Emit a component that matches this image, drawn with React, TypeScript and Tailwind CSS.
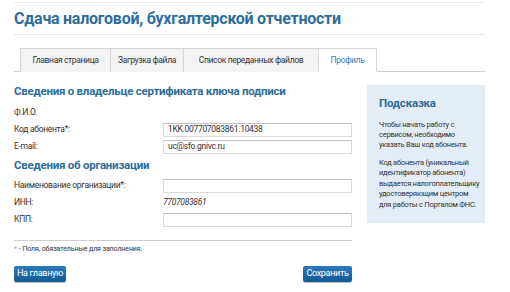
import React from "react";

const tabs = [
  { id: 1, title: "Главная страница", w: "w-[90px]" },
  { id: 2, title: "Загрузка файла", w: "w-[73px]" },
  { id: 3, title: "Список переданных файлов", w: "w-[135px]" },
  { id: 4, title: "Профиль", w: "w-[59px]", active: true },
];

const font = "font-['Roboto',sans-serif]";

const Row = ({ label, children }: { label: string; children?: React.ReactNode }) => (
  <div className="h-[17px] flex items-center">
    <div className="w-[149px] shrink-0 text-[8.5px] tracking-[-0.3px] text-[#333]">{label}</div>
    <div className="flex-1">{children}</div>
  </div>
);

const Field = ({ value }: { value?: string }) => (
  <div className="h-[14px] border border-[#dadada] border-t-[#c2c2c2] bg-white flex items-center px-[4px] text-[8.5px] tracking-[-0.3px] text-[#333]">
    {value}
  </div>
);

const Button = ({ label }: { label: string }) => (
  <div className="h-[16px] rounded-[2px] bg-gradient-to-b from-[#2a7bbd] to-[#0d5a96] text-white text-[9px] tracking-[-0.3px] flex items-center justify-center shadow-[0_1px_1px_rgba(0,0,0,0.25)]">
    {label}
  </div>
);

export default function App() {
  return (
    <div className={`w-[510px] h-[292px] bg-white overflow-hidden ${font}`}>
      <div className="mx-[14px] w-[471px]">
        <div className="mt-[2px] border-t border-[#ececec]" />
        <div className="h-[31px] flex items-center">
          <h1 className="text-[16px] font-bold text-[#2d6d99] leading-none tracking-[-0.25px]">
            Сдача налоговой, бухгалтерской отчетности
          </h1>
        </div>
        <div className="border-t border-[#e6e6e6]" />

        <div className="mt-[13px] flex pl-[6px] border-b border-[#cfcfcf]">
          {tabs.map((tab) => (
            <div
              key={tab.id}
              className={`${tab.w} h-[24px] -mb-px flex items-center justify-center text-[8.5px] tracking-[-0.35px] border-t border-[#d6d6d6] ${
                tab.active
                  ? "bg-white text-[#3b7db3] border-x border-b border-b-white"
                  : "bg-[#f3f3f3] text-[#333] border-l"
              }`}
            >
              {tab.title}
            </div>
          ))}
        </div>

        <div className="pt-[8px] flex">
          <div className="w-[338px] shrink-0">
            <div className="h-[24px] flex items-center text-[11.5px] font-bold tracking-[-0.25px] text-[#2d6d99] whitespace-nowrap">
              Сведения о владельце сертификата ключа подписи
            </div>
            <Row label="Ф.И.О." />
            <Row label="Код абонента*:">
              <Field value="1KK.007707083861.10438" />
            </Row>
            <Row label="E-mail:">
              <Field value="uc@sfo.gnivc.ru" />
            </Row>
            <div className="h-[22px] flex items-center text-[11.5px] font-bold tracking-[-0.25px] text-[#2d6d99]">
              Сведения об организации
            </div>
            <Row label="Наименование организации*:">
              <Field />
            </Row>
            <Row label="ИНН:">
              <div className="text-[8.5px] italic tracking-[-0.3px] text-[#333]">7707083861</div>
            </Row>
            <Row label="КПП:">
              <Field />
            </Row>
            <div className="mt-[12px] border-t border-[#cfcfcf]" />
            <div className="h-[14px] mt-[1px] flex items-center text-[7px] tracking-[-0.1px] text-[#333]">
              <span className="text-[#999] mr-[2px]">*</span> - Поля, обязательные для заполнения.
            </div>
            <div className="mt-[10px] flex justify-between">
              <div className="w-[52px]">
                <Button label="На главную" />
              </div>
              <div className="w-[49px]">
                <Button label="Сохранить" />
              </div>
            </div>
          </div>

          <div className="ml-[15px] mt-[5px] w-[118px] h-[138px] bg-[#e3edf8] px-[12px] pt-[11px]">
            <div className="text-[11.5px] font-bold tracking-[-0.2px] text-[#2d6d99] leading-[14px]">Подсказка</div>
            <p className="mt-[10px] text-[7.5px] leading-[10px] tracking-[-0.25px] text-[#333] whitespace-nowrap">
              Чтобы начать работу с<br />
              сервисом, необходимо<br />
              указать Ваш код абонента.
            </p>
            <p className="mt-[8px] text-[7.5px] leading-[10.4px] tracking-[-0.25px] text-[#333] whitespace-nowrap">
              Код абонента (уникальный<br />
              идентификатор абонента)<br />
              выдается налогоплательщику<br />
              удостоверяющим центром<br />
              для работы с Порталом ФНС.
            </p>
          </div>
        </div>
      </div>
    </div>
  );
}
